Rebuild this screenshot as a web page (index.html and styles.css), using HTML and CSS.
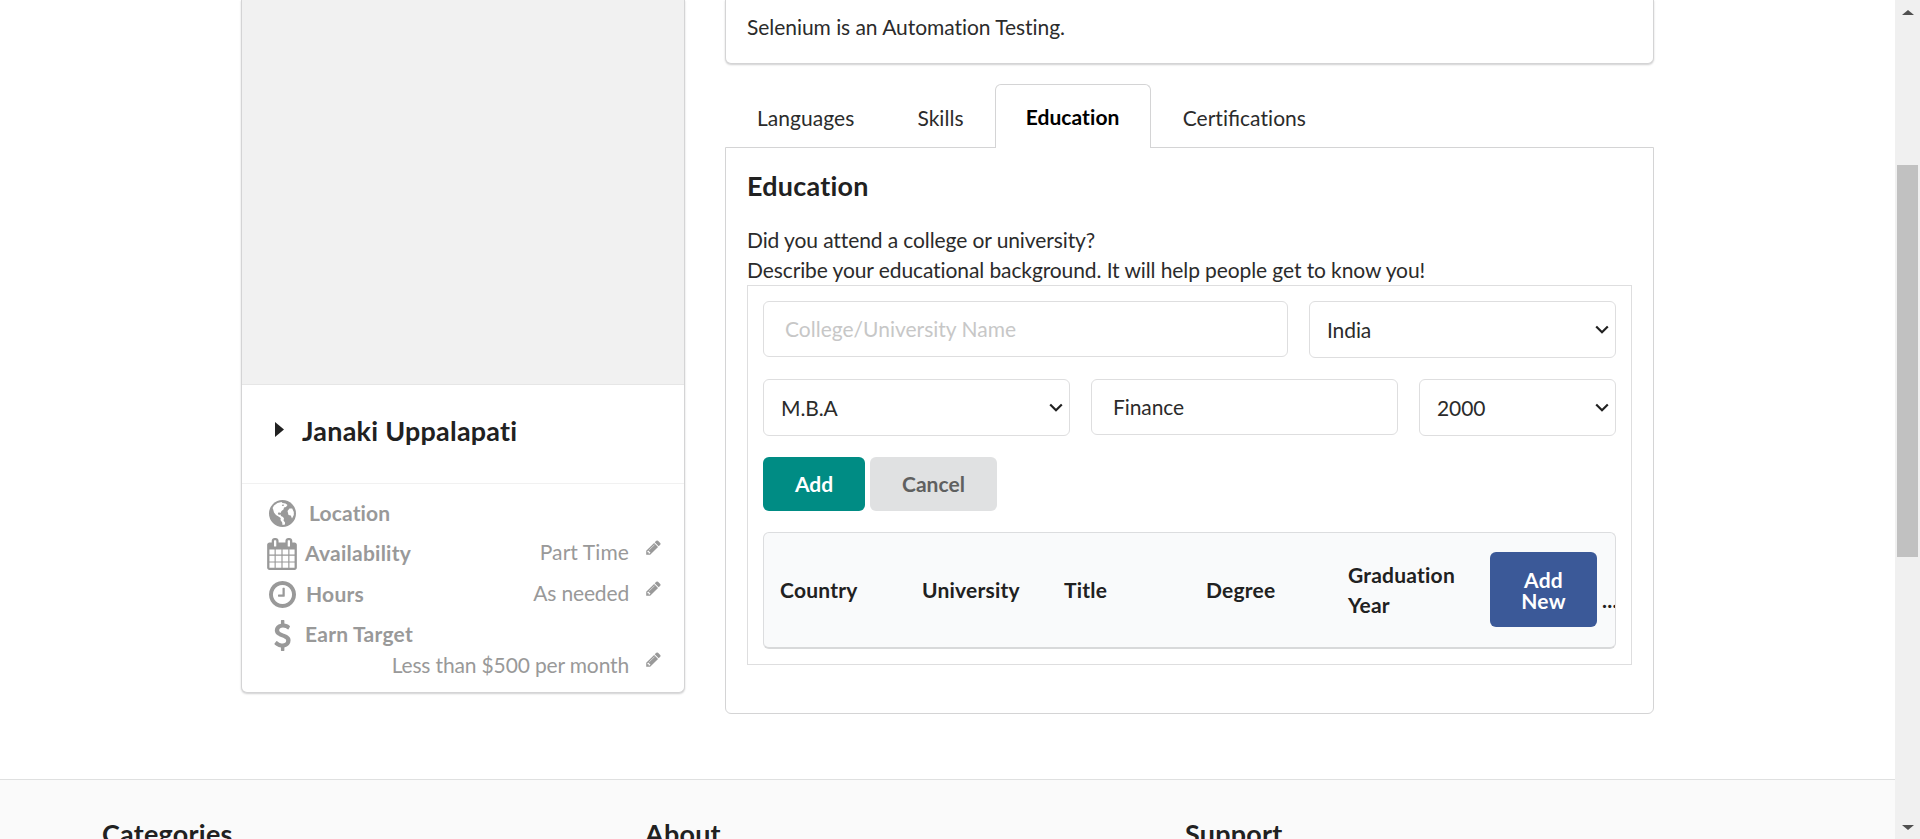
FILE: index.html
```html
<!DOCTYPE html>
<html lang="en">
<head>
<meta charset="utf-8">
<title>Profile</title>
<link rel="stylesheet" href="styles.css">
</head>
<body>
<svg class="defs" width="0" height="0">
  <symbol id="pencil" viewBox="0 0 1792 1792"><path d="M491 1536l91-91-235-235-91 91v107h128v128h107zm523-928q0-22-22-22-10 0-17 7l-542 542q-7 7-7 17 0 22 22 22 10 0 17-7l542-542q7-7 7-17zm-54-192l416 416-832 832h-416v-416zm683 96q0 53-37 90l-166 166-416-416 166-165q36-38 90-38 53 0 91 38l235 234q37 39 37 91z"/></symbol>
  <symbol id="chevron" viewBox="0 0 14 9"><path d="M1.200 1.500 7 7.200 12.800 1.500" fill="none" stroke="#212121" stroke-width="2.200"/></symbol>
</svg>
<div class="page">
  <div class="viewport">
    <main class="main">
      <aside class="card profile">
        <div class="photo"></div>
        <div class="name"><svg class="caret" viewBox="0 0 9 15"><path d="M0 0 9 7.500 0 15z"/></svg><h3>Janaki Uppalapati</h3></div>
        <div class="facts">
          <div class="fact location">
            <svg class="icon" viewBox="0 0 27 27"><circle cx="13.500" cy="13.500" r="13.500"/><path class="land" d="M5 5.500 8.500 3 12.500 2 13.500 3 16.500 3.500 18.500 5 17 7 15 7.500 14.500 9.500 12.500 11 11.500 13 9.800 12.300 8.800 13.500 9.800 15 11.500 14.500 12 16 14 17 15 18.500 14.500 20.500 16 22.500 16 24.500 13.500 25 13.200 22.500 11.500 20 11.700 18 9.500 16.500 7 15 5 12.500 4.200 9.500 3.600 8zM18.500 11 20.500 8.500 23.200 8.500 24.800 12 24.800 15 23 18.500 21.800 15.500 19.500 15z"/><path d="M13.500 4.600 15 4.800 14.500 6 12.800 5.800z"/></svg>
            <b>Location</b>
          </div>
          <div class="fact"><svg class="icon wide" viewBox="64 0 1664 1792"><path d="M192 1664h288v-288h-288v288zm352 0h320v-288h-320v288zm-352-352h288v-320h-288v320zm352 0h320v-320h-320v320zm-352-384h288v-288h-288v288zm736 736h320v-288h-320v288zm-384-736h320v-288h-320v288zm768 736h288v-288h-288v288zm-384-352h320v-320h-320v320zm-352-864v-288q0-13-9.500-22.500t-22.500-9.500h-64q-13 0-22.500 9.500t-9.500 22.500v288q0 13 9.500 22.500t22.500 9.500h64q13 0 22.500-9.500t9.500-22.500zm736 864h288v-320h-288v320zm-384-384h320v-288h-320v288zm384 0h288v-288h-288v288zm32-480v-288q0-13-9.500-22.500t-22.500-9.500h-64q-13 0-22.500 9.500t-9.500 22.500v288q0 13 9.500 22.500t22.500 9.500h64q13 0 22.500-9.500t9.500-22.500zm384-64v1280q0 52-38 90t-90 38h-1408q-52 0-90-38t-38-90v-1280q0-52 38-90t90-38h128v-96q0-66 47-113t113-47h64q66 0 113 47t47 113v96h384v-96q0-66 47-113t113-47h64q66 0 113 47t47 113v96h128q52 0 90 38t38 90z"/></svg><b>Availability</b><span class="value short">Part Time</span><svg class="edit"><use href="#pencil"/></svg></div>
          <div class="fact"><svg class="icon" viewBox="128 128 1536 1536"><path d="M1024 544v448q0 14-9 23t-23 9h-320q-14 0-23-9t-9-23v-64q0-14 9-23t23-9h224v-352q0-14 9-23t23-9h64q14 0 23 9t9 23zm416 352q0-148-73-273t-198-198-273-73-273 73-198 198-73 273 73 273 198 198 273 73 273-73 198-198 73-273zm224 0q0 209-103 385.500t-279.500 279.500-385.500 103-385.500-103-279.500-279.500-103-385.500 103-385.500 279.500-279.500 385.500-103 385.500 103 279.500 279.500 103 385.500z"/></svg><b>Hours</b><span class="value">As needed</span><svg class="edit"><use href="#pencil"/></svg></div>
          <div class="fact"><svg class="icon tall" viewBox="0 0 1792 1792"><path d="M1362 1185q0 153-99.500 263.500t-258.500 136.500v175q0 14-9 23t-23 9h-135q-13 0-22.500-9.500t-9.500-22.500v-175q-66-9-127.500-31t-101.500-44.500-74-48-46.500-37.500-17.500-18q-17-21-2-41l103-135q7-10 23-12 15-2 24 9l2 2q113 99 243 125 37 8 74 8 81 0 142.500-43t61.500-122q0-28-15-53t-33.500-42-58.500-37.500-66-32-80-32.500q-39-16-61.500-25t-61.500-26.500-62.500-31-56.500-35.500-53.500-42.500-43.500-49-35.500-58-21-66.500-8.500-78q0-138 98-242t255-134v-180q0-13 9.500-22.500t22.500-9.500h135q14 0 23 9t9 23v176q57 6 110.500 23t87 33.500 63.500 37.500 39 29 15 14q17 18 5 38l-81 146q-8 15-23 16-14 3-27-7-3-3-14.500-12t-39-26.500-58.500-32-74.500-26-85.500-11.500q-95 0-155 43t-60 111q0 26 8.500 48t29.500 41.500 39.500 33 56 31 60.500 27 70 27.500q53 20 81 31.500t76 35 75.500 42.500 62 50 53 63.500 31.500 76.500 13 94z"/></svg><b>Earn Target</b></div>
          <div class="fact earn"><span class="value">Less than $500 per month</span><svg class="edit"><use href="#pencil"/></svg></div>
        </div>
      </aside>
      <section class="content">
        <div class="card summary">Selenium is an Automation Testing.</div>
        <nav class="tabs">
          <a class="tab">Languages</a><a class="tab">Skills</a><a class="tab active">Education</a><a class="tab">Certi<span class="joined">fi</span>cations</a>
        </nav>
        <div class="panel">
          <h3>Education</h3>
          <p>Did you attend a college or university?<br>Describe your educational background. It will help people get to know you!</p>
          <div class="editor">
            <div class="row first">
              <div class="input hint">College/University Name</div>
              <div class="select">India<svg><use href="#chevron"/></svg></div>
            </div>
            <div class="row second">
              <div class="select">M.B.A<svg><use href="#chevron"/></svg></div>
              <div class="input">Finance</div>
              <div class="select">2000<svg><use href="#chevron"/></svg></div>
            </div>
            <div class="buttons"><div class="button teal">Add</div><div class="button cancel">Cancel</div></div>
            <div class="table">
              <div>Country</div><div>University</div><div>Title</div><div>Degree</div><div>Graduation Year</div>
              <div class="action"><div class="button new">Add New</div><span class="more">...</span></div>
            </div>
          </div>
        </div>
      </section>
    </main>
    <footer class="footer"><h3>Categories</h3><h3>About</h3><h3>Support</h3></footer>
  </div>
  <div class="scrollbar">
    <svg class="arrow" viewBox="0 0 12 6"><path d="M0 5 6 0 12 5z"/></svg>
    <div class="thumb"></div>
    <svg class="arrow" viewBox="0 0 12 6"><path d="M0 0 6 5 12 0z"/></svg>
  </div>
</div>
</body>
</html>
```
FILE: styles.css
```css
* { box-sizing: border-box; }
body { margin: 0; background: #fff; color: #2b2b2b; font: 21px/30px Lato, sans-serif; letter-spacing: -.1px; overflow: hidden; }
h3 { margin: 0; color: #212121; font-size: 26.900px; line-height: 34px; font-weight: 700; letter-spacing: .27px; }
p { margin: 0; }
svg { display: block; flex: none; }
.defs { position: absolute; }
.page { display: flex; height: 839px; overflow: hidden; }
.viewport { width: 1895px; height: 839px; overflow: hidden; }
.main { display: flex; align-items: flex-start; gap: 40px; height: 779px; padding-left: 241px; }

.card { background: #fff; border: 1px solid #d4d4d5; border-top: 0; border-radius: 0 0 6px 6px; box-shadow: 0 1px 2px #d0d0d1; }
.profile { width: 444px; height: 693px; }
.photo { height: 385px; background: #f1f1f1; border-bottom: 1px solid #e6e6e6; }
.name { display: flex; height: 99px; padding: 29px 0 0 33px; border-bottom: 1px solid #f1f1f1; }
.caret { width: 9px; height: 15px; margin: 8px 18px 0 0; fill: #212121; }
.facts { padding: 12px 22px 0 25px; color: #999; }
.fact { display: flex; align-items: center; height: 40.600px; }
.fact b { flex: 1; letter-spacing: .25px; }
.icon { width: 27px; height: 27px; margin: 2px 10px 0 2px; fill: #999; }
.icon.wide { width: 30px; height: 32px; margin: 2px 8px 0 0; }
.icon.tall { width: 31px; height: 31px; margin: 2px 7px 0 0; }
.location { height: 34px; margin-bottom: 3px; }
.location .icon { margin-right: 13px; margin-top: 0; }
.location b { letter-spacing: .15px; }
.land { fill: #fff; }
.value { margin-right: 16px; padding-bottom: 1px; letter-spacing: -.15px; }
.value.short { padding-bottom: 2px; letter-spacing: .1px; }
.edit { width: 17px; height: 17px; margin-bottom: 11px; fill: #999; }
.earn { justify-content: flex-end; height: 21px; }

.content { width: 929px; }
.summary { height: 64px; padding: 12px 21px; letter-spacing: -.05px; }
.tabs { position: relative; z-index: 1; display: flex; height: 84px; padding-top: 20px; letter-spacing: .05px; }
.tab { height: 64px; padding: 18px 30px 0 31px; border: 1px solid transparent; border-bottom: 0; }
.tab.active { width: 156px; padding: 17px 0 0 30px; border-color: #d4d4d5; border-radius: 6px 6px 0 0; background: #fff; color: #000; font-weight: 700; letter-spacing: .08px; }
.joined { letter-spacing: 0; }
.panel { height: 567px; margin-top: -1px; padding: 21px 21px 0; border: 1px solid #d4d4d5; border-radius: 0 0 6px 6px; }
.panel p { margin-top: 22px; }
.editor { height: 380px; padding: 15px; border: 1px solid #dededf; }
.row { display: grid; gap: 21px; height: 78px; align-items: start; }
.first { grid-template-columns: 525px 307px; }
.second { grid-template-columns: 307px 307px 197px; }
.input, .select { border: 1px solid #dededf; border-radius: 6px; }
.input { height: 56px; padding: 12px 21px; }
.hint { color: #c7c7c7; letter-spacing: 0; }
.select { display: flex; height: 57px; padding: 13px 6px 0 17px; justify-content: space-between; }
.select svg { width: 14px; height: 9px; margin-top: 10px; }
.buttons { display: flex; gap: 5px; height: 75px; }
.button { height: 54px; padding: 16px 31px; border-radius: 6px; color: #fff; font-weight: 700; line-height: 21px; text-align: center; }
.teal { width: 102px; background: #008c84; }
.cancel { width: 127px; background: #e0e1e2; color: #5f6060; letter-spacing: .05px; }
.table { display: grid; grid-template-columns: repeat(5, 142px) 1fr; align-items: center; height: 117px; border: 1px solid #dcdddf; border-bottom: 2px solid #d8d9da; border-radius: 6px; background: #f9fafb; color: #212121; font-weight: 700; letter-spacing: .22px; overflow: hidden; }
.table > div { padding-left: 16px; }
.table .action { display: flex; padding: 0 0 2px 16px; }
.new { width: 107px; height: 75px; flex: none; padding-top: 17px; background: #3b5998; }
.more { margin: 33px 0 0 5px; }

.footer { display: grid; grid-template-columns: 543px 540px 1fr; height: 100px; padding: 37px 0 0 102px; border-top: 1px solid #dfe0e0; background: #fafafa; }
.scrollbar { display: flex; flex-direction: column; align-items: center; width: 25px; background: #f0f0f0; padding: 10px 0 8px; justify-content: space-between; }
.arrow { width: 12px; height: 6px; fill: #505050; }
.thumb { width: 21px; height: 392px; margin-bottom: 119px; background: #c1c1c1; }
```
